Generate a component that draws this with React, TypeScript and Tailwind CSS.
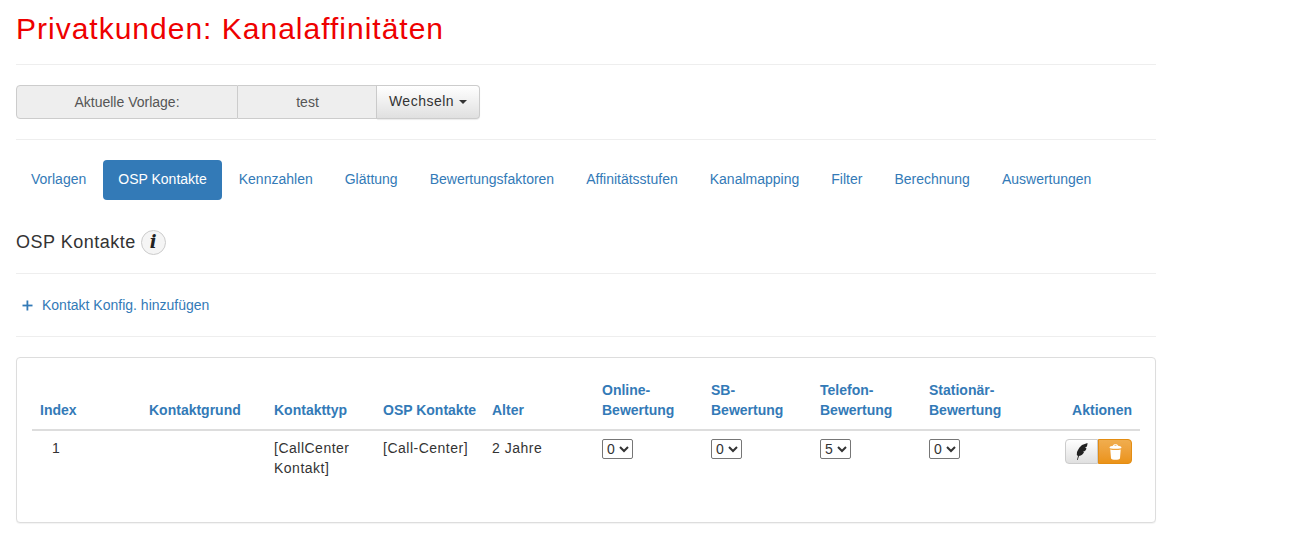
const navItems = [
  "Vorlagen",
  "OSP Kontakte",
  "Kennzahlen",
  "Glättung",
  "Bewertungsfaktoren",
  "Affinitätsstufen",
  "Kanalmapping",
  "Filter",
  "Berechnung",
  "Auswertungen",
];

const ratings = [
  { label: "Online-", value: "0" },
  { label: "SB-", value: "0" },
  { label: "Telefon-", value: "5" },
  { label: "Stationär-", value: "0" },
];

const Divider = () => <hr className="border-0 border-t border-[#eeeeee]" />;

const App = () => {
  return (
    <div className="min-h-screen bg-white">
      <div className="w-[1156px] pl-4 text-sm text-[#333333] font-['Liberation_Sans',Arial,sans-serif]">
        <h1 className="h-16 pt-3 text-[30px] leading-[33px] tracking-[1px] text-[#ee0000]">
          Privatkunden: Kanalaffinitäten
        </h1>
        <Divider />

        <div className="mt-5 flex h-[34px] w-[464px]">
          <div className="flex w-[222px] items-center justify-center rounded-l border border-[#cccccc] bg-[#eeeeee] text-[#555555]">
            Aktuelle Vorlage:
          </div>
          <div className="flex w-[139px] items-center justify-center border-y border-r border-[#cccccc] bg-[#eeeeee] pl-px text-[#555555]">
            test
          </div>
          <button className="flex w-[103px] items-center justify-center gap-[5px] rounded-r border-y border-r border-[#cccccc] bg-gradient-to-b from-white to-[#e0e0e0] pb-[3px] tracking-[0.5px] text-[#333333] shadow-[0_1px_1px_rgba(0,0,0,0.08)]">
            Wechseln
            <span className="mt-[3px] h-0 w-0 border-x-4 border-t-4 border-x-transparent border-t-[#333333]" />
          </button>
        </div>

        <div className="mt-5">
          <Divider />
        </div>

        <ul className="mt-5 flex gap-0.5">
          {navItems.map((item) => (
            <li
              key={item}
              className={
                item === "OSP Kontakte"
                  ? "rounded bg-[#337ab7] px-[15px] pt-[9px] pb-[11px] leading-5 text-white"
                  : "rounded px-[15px] pt-[9px] pb-[11px] leading-5 text-[#337ab7]"
              }
            >
              {item}
            </li>
          ))}
        </ul>

        <div className="mt-[28px] flex h-[28px] items-center gap-[5px]">
          <h2 className="text-lg leading-[20px] tracking-[0.5px]">OSP Kontakte</h2>
          <span className="flex h-[25px] w-[25px] items-center justify-center rounded-full border border-[#cccccc] bg-[#f5f5f5] font-['DejaVu_Serif',serif] text-[18px] font-bold italic leading-none text-[#222222]">
            i
          </span>
        </div>

        <div className="mt-[17px]">
          <Divider />
        </div>

        <div className="flex h-[62px] items-center pl-[6px] text-[#337ab7]">
          <svg width="11" height="11" viewBox="0 0 11 11" className="mr-[9px]" fill="currentColor">
            <rect x="4.500" y="0.500" width="1.800" height="10" />
            <rect x="0.500" y="4.600" width="10" height="1.800" />
          </svg>
          <span>Kontakt Konfig. hinzufügen</span>
        </div>
        <Divider />

        <div className="mt-5 h-[166px] rounded border border-[#dddddd] bg-white px-[15px] pt-[14px] shadow-[0_1px_1px_rgba(0,0,0,0.05)]">
          <table className="w-[1108px] table-fixed border-collapse">
            <colgroup>
              <col className="w-[109px]" />
              <col className="w-[125px]" />
              <col className="w-[109px]" />
              <col className="w-[109px]" />
              <col className="w-[110px]" />
              <col className="w-[109px]" />
              <col className="w-[109px]" />
              <col className="w-[109px]" />
              <col className="w-[109px]" />
              <col className="w-[110px]" />
            </colgroup>
            <thead>
              <tr className="border-b-2 border-[#dddddd] text-left align-bottom font-bold leading-5 text-[#337ab7]">
                <th className="px-2 pt-2 pb-[9px]">Index</th>
                <th className="px-2 pt-2 pb-[9px]">Kontaktgrund</th>
                <th className="px-2 pt-2 pb-[9px]">Kontakttyp</th>
                <th className="px-2 pt-2 pb-[9px] whitespace-nowrap">OSP Kontakte</th>
                <th className="px-2 pt-2 pb-[9px]">Alter</th>
                {ratings.map((r) => (
                  <th key={r.label} className="px-2 pt-2 pb-[9px]">
                    {r.label}
                    <br />
                    Bewertung
                  </th>
                ))}
                <th className="px-2 pt-2 pb-[9px] text-right">Aktionen</th>
              </tr>
            </thead>
            <tbody>
              <tr className="align-top leading-5 tracking-[0.5px]">
                <td className="pt-[7px] pr-2 pl-5">1</td>
                <td className="px-2 pt-[7px]" />
                <td className="px-2 pt-[7px]">
                  [CallCenter
                  <br />
                  Kontakt]
                </td>
                <td className="px-2 pt-[7px] whitespace-nowrap">[Call-Center]</td>
                <td className="px-2 pt-[7px]">2 Jahre</td>
                {ratings.map((r) => (
                  <td key={r.label} className="px-2 pt-2">
                    <select
                      defaultValue={r.value}
                      className="block h-[20px] rounded-[2px] border border-[#767676] bg-white text-sm leading-none text-[#333333] [appearance:auto]"
                    >
                      <option>0</option>
                      <option>5</option>
                    </select>
                  </td>
                ))}
                <td className="px-2 pt-2">
                  <div className="flex justify-end">
                    <button className="flex h-[25px] w-[33px] items-center justify-center rounded-l border border-[#cccccc] bg-gradient-to-b from-white to-[#e0e0e0] text-[#222222]">
                      <svg width="12" height="17" viewBox="0 0 12 17" fill="currentColor">
                        <path d="M1 17 2 13 .8 12 1 9 2 7 3.500 4.500 6 2 11.500 0C11.500 2 11 3 10.500 4L9 4.500 10.500 5.500C10 7 9 8 8 8.500L7 8.500 8 9.500C7 11 5.500 12.500 3 13L1.700 17Z" />
                      </svg>
                    </button>
                    <button className="flex h-[25px] w-[34px] items-center justify-center rounded-r border border-[#e38d13] bg-gradient-to-b from-[#f0ad4e] to-[#eb9316] text-white">
                      <svg width="13" height="16" viewBox="0 0 13 16" fill="currentColor">
                        <path d="M.5 3.700C.5 2.300 3 1.900 4 1.800 4.300.6 5.300.2 6.500.2s2.200.4 2.500 1.600c1 .1 3.500.5 3.500 1.900 0 .6-2.600 1.100-6 1.100S.5 4.300.5 3.700zM5.100 1.700h2.800C7.700 1.200 7.100 1 6.500 1s-1.200.2-1.400.7z" />
                        <path d="M1.300 5.500C2.700 6 4.400 6.100 6.500 6.100s3.800-.1 5.200-.6l-.7 8.800c-.1 1-2.500 1.500-4.500 1.500s-4.400-.5-4.500-1.500z" />
                      </svg>
                    </button>
                  </div>
                </td>
              </tr>
            </tbody>
          </table>
        </div>
      </div>
    </div>
  );
};

export default App;
